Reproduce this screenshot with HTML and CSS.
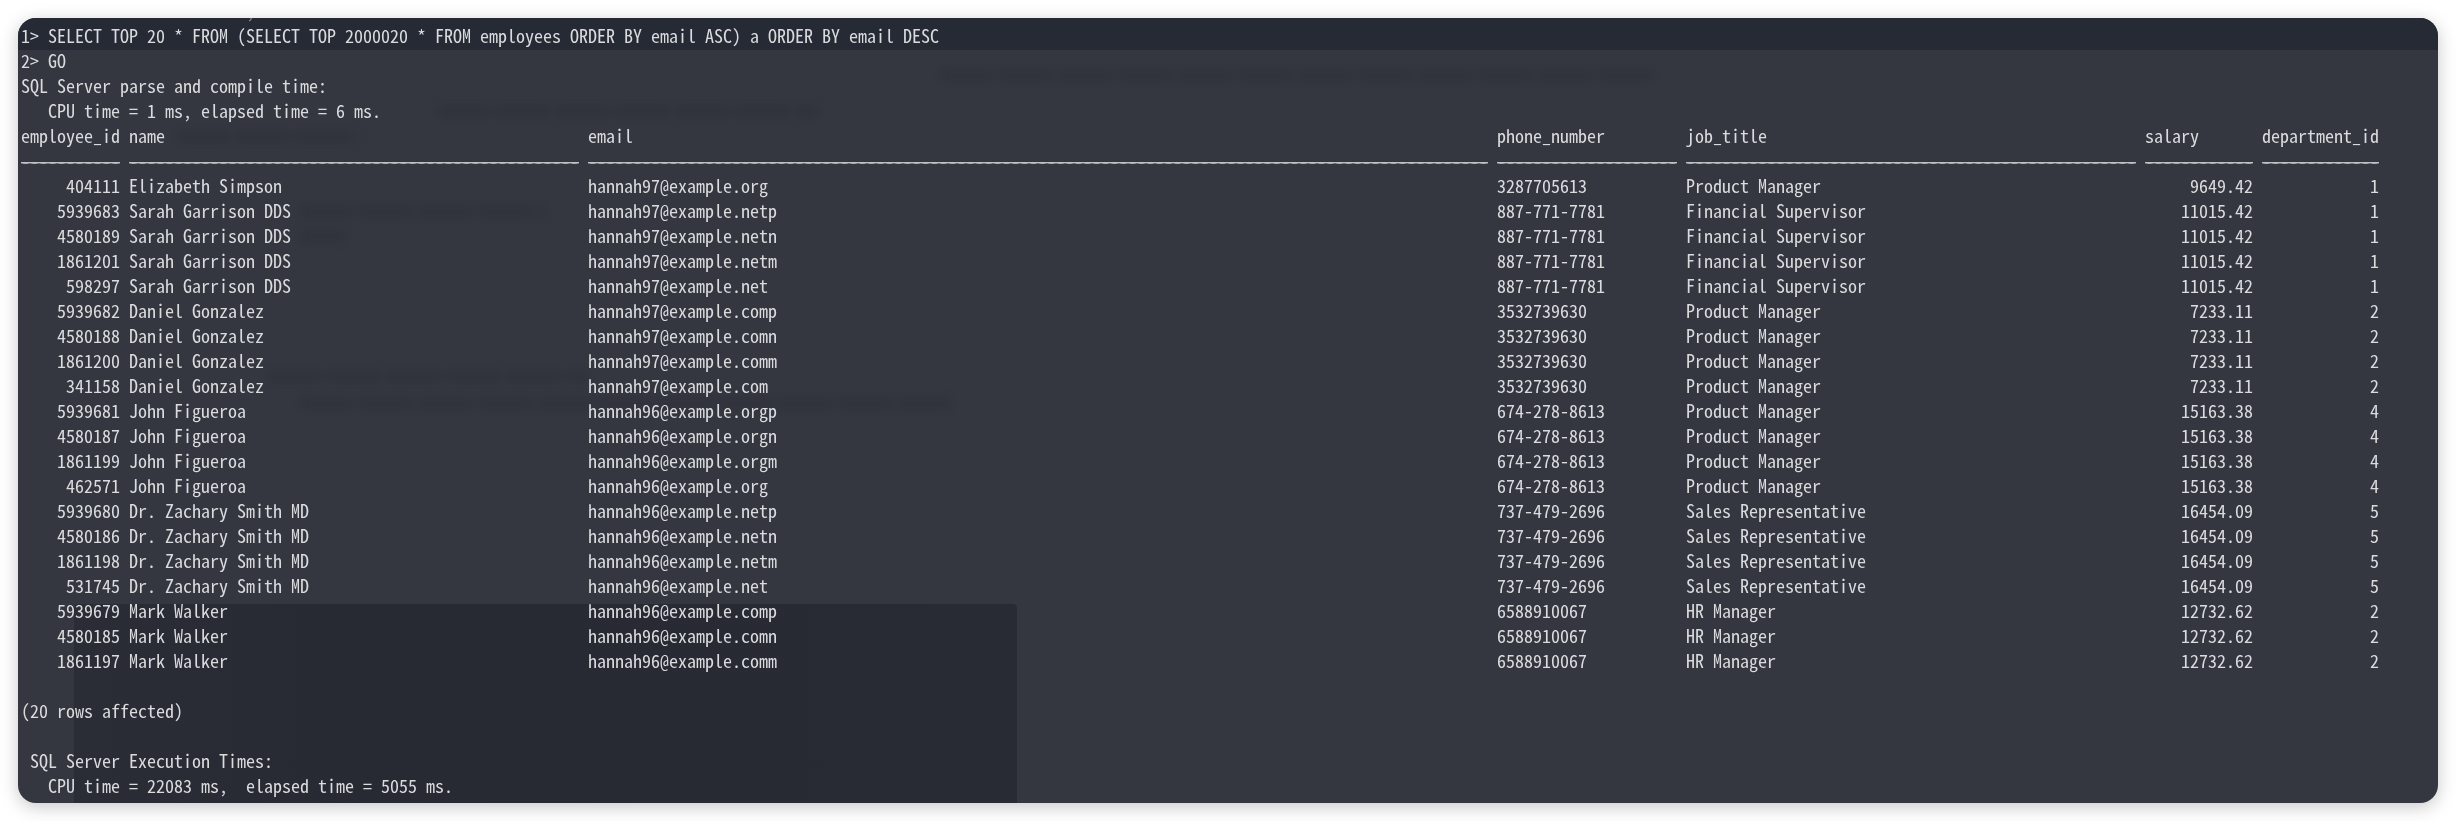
FILE: index.html
```html
<!DOCTYPE html>
<html lang="en">
<head>
<meta charset="utf-8">
<title>sqlcmd</title>
<link rel="stylesheet" href="styles.css">
</head>
<body>
<main class="term">
  <div class="topbar"></div>
  <div class="ghost-panel"></div>
  <div class="ghost g1"></div>
  <div class="ghost g2"></div>
  <div class="ghost g3"></div>
  <div class="ghost g4"></div>
  <div class="ghost g5"></div>
  <div class="ghost g6"></div>
  <div class="ghost g7"></div>
  <div class="output">
    <div class="line cutoff">1&gt; SET STATISTICS TIME ON;</div>
    <div class="line">1&gt; SELECT TOP 20 * FROM (SELECT TOP 2000020 * FROM employees ORDER BY email ASC) a ORDER BY email DESC</div>
    <div class="line">2&gt; GO</div>
    <div class="line">SQL Server parse and compile time:</div>
    <div class="line">   CPU time = 1 ms, elapsed time = 6 ms.</div>
    <div class="grid">
      <span>employee_id</span><span>name</span><span>email</span><span>phone_number</span><span>job_title</span><span>salary</span><span>department_id</span>
      <span class="rule">-----------</span><span class="rule">--------------------------------------------------</span><span class="rule">----------------------------------------------------------------------------------------------------</span><span class="rule">--------------------</span><span class="rule">--------------------------------------------------</span><span class="rule">------------</span><span class="rule">-------------</span>
      <span class="r">404111</span><span>Elizabeth Simpson</span><span>hannah97@example.org</span><span>3287705613</span><span>Product Manager</span><span class="r">9649.42</span><span class="r">1</span>
      <span class="r">5939683</span><span>Sarah Garrison DDS</span><span>hannah97@example.netp</span><span>887-771-7781</span><span>Financial Supervisor</span><span class="r">11015.42</span><span class="r">1</span>
      <span class="r">4580189</span><span>Sarah Garrison DDS</span><span>hannah97@example.netn</span><span>887-771-7781</span><span>Financial Supervisor</span><span class="r">11015.42</span><span class="r">1</span>
      <span class="r">1861201</span><span>Sarah Garrison DDS</span><span>hannah97@example.netm</span><span>887-771-7781</span><span>Financial Supervisor</span><span class="r">11015.42</span><span class="r">1</span>
      <span class="r">598297</span><span>Sarah Garrison DDS</span><span>hannah97@example.net</span><span>887-771-7781</span><span>Financial Supervisor</span><span class="r">11015.42</span><span class="r">1</span>
      <span class="r">5939682</span><span>Daniel Gonzalez</span><span>hannah97@example.comp</span><span>3532739630</span><span>Product Manager</span><span class="r">7233.11</span><span class="r">2</span>
      <span class="r">4580188</span><span>Daniel Gonzalez</span><span>hannah97@example.comn</span><span>3532739630</span><span>Product Manager</span><span class="r">7233.11</span><span class="r">2</span>
      <span class="r">1861200</span><span>Daniel Gonzalez</span><span>hannah97@example.comm</span><span>3532739630</span><span>Product Manager</span><span class="r">7233.11</span><span class="r">2</span>
      <span class="r">341158</span><span>Daniel Gonzalez</span><span>hannah97@example.com</span><span>3532739630</span><span>Product Manager</span><span class="r">7233.11</span><span class="r">2</span>
      <span class="r">5939681</span><span>John Figueroa</span><span>hannah96@example.orgp</span><span>674-278-8613</span><span>Product Manager</span><span class="r">15163.38</span><span class="r">4</span>
      <span class="r">4580187</span><span>John Figueroa</span><span>hannah96@example.orgn</span><span>674-278-8613</span><span>Product Manager</span><span class="r">15163.38</span><span class="r">4</span>
      <span class="r">1861199</span><span>John Figueroa</span><span>hannah96@example.orgm</span><span>674-278-8613</span><span>Product Manager</span><span class="r">15163.38</span><span class="r">4</span>
      <span class="r">462571</span><span>John Figueroa</span><span>hannah96@example.org</span><span>674-278-8613</span><span>Product Manager</span><span class="r">15163.38</span><span class="r">4</span>
      <span class="r">5939680</span><span>Dr. Zachary Smith MD</span><span>hannah96@example.netp</span><span>737-479-2696</span><span>Sales Representative</span><span class="r">16454.09</span><span class="r">5</span>
      <span class="r">4580186</span><span>Dr. Zachary Smith MD</span><span>hannah96@example.netn</span><span>737-479-2696</span><span>Sales Representative</span><span class="r">16454.09</span><span class="r">5</span>
      <span class="r">1861198</span><span>Dr. Zachary Smith MD</span><span>hannah96@example.netm</span><span>737-479-2696</span><span>Sales Representative</span><span class="r">16454.09</span><span class="r">5</span>
      <span class="r">531745</span><span>Dr. Zachary Smith MD</span><span>hannah96@example.net</span><span>737-479-2696</span><span>Sales Representative</span><span class="r">16454.09</span><span class="r">5</span>
      <span class="r">5939679</span><span>Mark Walker</span><span>hannah96@example.comp</span><span>6588910067</span><span>HR Manager</span><span class="r">12732.62</span><span class="r">2</span>
      <span class="r">4580185</span><span>Mark Walker</span><span>hannah96@example.comn</span><span>6588910067</span><span>HR Manager</span><span class="r">12732.62</span><span class="r">2</span>
      <span class="r">1861197</span><span>Mark Walker</span><span>hannah96@example.comm</span><span>6588910067</span><span>HR Manager</span><span class="r">12732.62</span><span class="r">2</span>
    </div>
    <div class="line"></div>
    <div class="line">(20 rows affected)</div>
    <div class="line"></div>
    <div class="line"> SQL Server Execution Times:</div>
    <div class="line">   CPU time = 22083 ms,  elapsed time = 5055 ms.</div>
  </div>
</main>
</body>
</html>
```
FILE: styles.css
```css
html, body {
  margin: 0;
  background: #fff;
}
body {
  padding: 18px;
  box-sizing: border-box;
  height: 821px;
  overflow: hidden;
}
.term {
  position: relative;
  height: 785px;
  background: #343740;
  border-radius: 18px;
  overflow: hidden;
  box-shadow: 0 4px 18px rgba(0, 0, 0, .22);
}
.topbar {
  position: absolute;
  inset: 0 0 auto 0;
  height: 32px;
  background: #262a35;
}
.ghost-panel {
  position: absolute;
  left: 56px;
  top: 586px;
  width: 943px;
  height: 199px;
  background: linear-gradient(90deg, #2a2c36, #272933 30%, #282a34);
  border-radius: 4px 4px 0 0;
}
.ghost {
  position: absolute;
  height: 11px;
  background: repeating-linear-gradient(90deg, #2c2f38 0 50px, #30333c 50px 60px);
  filter: blur(4px);
  opacity: .55;
}
.g1 { left: 922px; top: 52px; width: 715px; }
.g2 { left: 420px; top: 88px; width: 380px; }
.g3 { left: 160px; top: 113px; width: 180px; }
.g4 { left: 282px; top: 188px; width: 245px; }
.g5 { left: 282px; top: 213px; width: 45px; }
.g6 { left: 250px; top: 353px; width: 320px; }
.g7 { left: 282px; top: 380px; width: 650px; }
.output {
  position: relative;
  margin-top: -20px;
  padding-left: 3px;
  font-family: "Noto Sans Mono CJK SC", "Noto Sans Mono", "DejaVu Sans Mono", monospace;
  font-size: 18px;
  line-height: 25px;
  color: #d9dbdd;
  filter: blur(.35px);
}
.line {
  height: 25px;
  white-space: pre;
}
.cutoff { color: #8d9096; }
.grid {
  display: grid;
  grid-template-columns: 99px 450px 900px 180px 450px 108px 117px;
  column-gap: 9px;
  grid-auto-rows: 25px;
}
.grid span {
  overflow: hidden;
  white-space: pre;
}
.r { text-align: right; }
.grid .rule {
  color: #bfc1c4;
  text-shadow: 1px 0 0 #bfc1c4, -1px 0 0 #bfc1c4, 2px 0 0 #bfc1c4, -2px 0 0 #bfc1c4;
}
```
